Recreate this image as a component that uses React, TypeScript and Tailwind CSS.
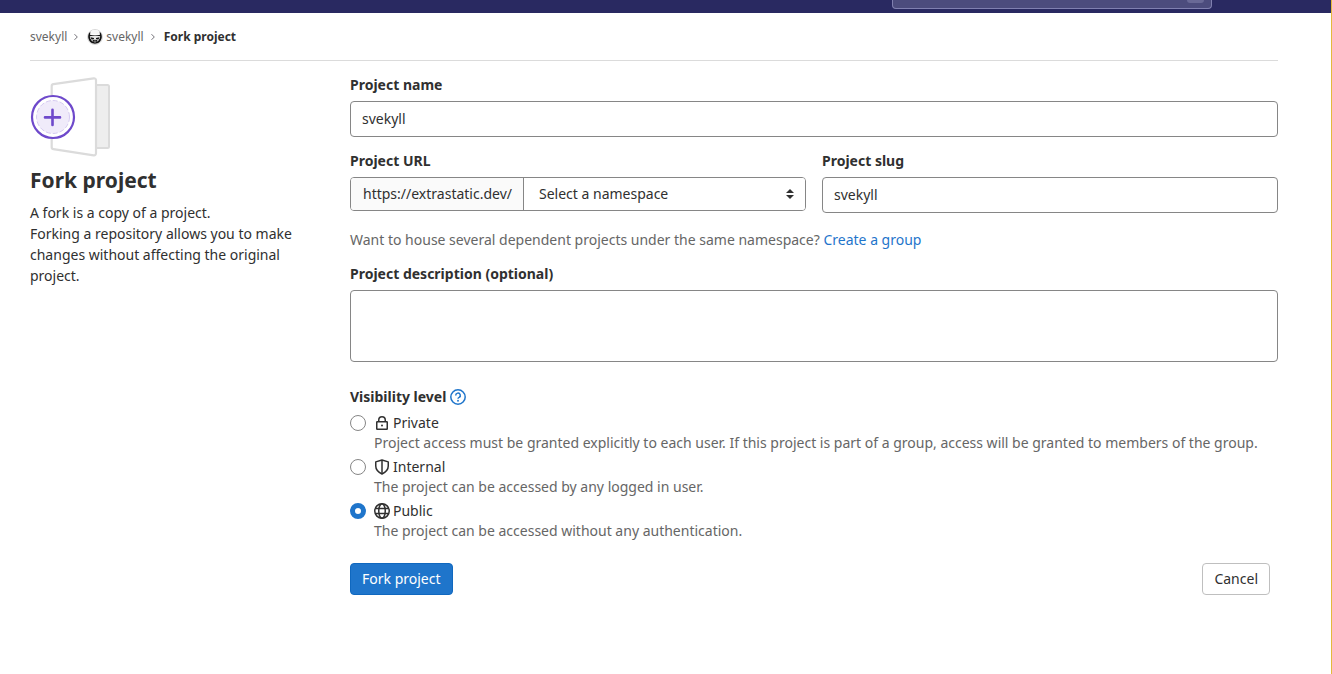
import { ReactNode } from 'react'

const INPUT = 'block w-full rounded border border-[#868686] bg-white px-[11px] text-sm text-[#303030] outline-none'
const LABEL = 'mb-[6px] block text-sm leading-5 font-bold'

const Chevron = () => (
  <svg className="mr-[2px] h-2 w-2 text-[#737278]" viewBox="0 0 8 8" fill="none" stroke="currentColor" strokeWidth="1">
    <path d="M2.5 1.2 5.3 4 2.5 6.8" />
  </svg>
)

const Avatar = () => (
  <svg className="h-4 w-4" viewBox="0 0 16 16">
    <circle cx="8" cy="8" r="7.5" fill="#fff" stroke="#d8d8d8" />
    <path d="M3.500 2.500C1.800 4 1 6 1.200 8.300 1.500 12 4.400 14.800 8 14.800s6.500-2.800 6.800-6.500c.2-2.300-.6-4.300-2.300-5.800l.3 3.500H3.200z" fill="#111" />
    <path d="M3.800 2.600C5 1.400 6.500 1 8 1s3 .4 4.200 1.600l.3 3c-3-.7-6-.7-9 0z" fill="#f6f6f6" />
    <path d="M2.800 7.300c3.400-1 7-1 10.400 0l-.5 2.300-1.500 2.400L8 13.500 4.800 12 3.300 9.600z" fill="#e8e8e8" />
    <path d="M3.600 8.300 7 9v1.300l-2.500.1zM12.400 8.300 9 9v1.300l2.500.1zM5.500 11.300 8 10.800l2.500.5-.7 1.500H6.200z" fill="#111" />
    <path d="M7 11.700h2v.6H7z" fill="#ddd" />
  </svg>
)

const ForkIllustration = () => (
  <svg className="block h-20 w-20" viewBox="0 0 80 80" fill="none">
    <path d="M66 8h11.500a1.500 1.500 0 0 1 1.500 1.500v60a1.500 1.500 0 0 1-1.500 1.500H66z" fill="#eee" stroke="#dbdbdb" strokeWidth="2" />
    <path
      d="M21.700 9.200a2 2 0 0 1 1.700-2L63.700 1.300A2 2 0 0 1 66 3.300v73a2 2 0 0 1-2.300 2l-40.300-6.200a2 2 0 0 1-1.700-2z"
      fill="#fff"
      stroke="#dbdbdb"
      strokeWidth="2.200"
    />
    <circle cx="23" cy="40" r="21" fill="#fff" stroke="#6e49cb" strokeWidth="2.200" />
    <circle cx="23" cy="40" r="16.500" fill="#f0ebfa" stroke="#cdbfee" strokeWidth=".8" strokeDasharray="5 2" />
    <path d="M22.500 32.700v15.300M15 40.400h15" stroke="#6e49cb" strokeWidth="2.600" strokeLinecap="round" />
  </svg>
)

const HelpIcon = () => (
  <svg className="h-4 w-4" viewBox="0 0 16 16" fill="none" stroke="currentColor" strokeWidth="1.500">
    <circle cx="8" cy="8" r="7.200" />
    <path d="M5.700 6.400a2.300 2.300 0 1 1 3.400 2C8.300 8.800 8 9 8 9.800" />
    <circle cx="8" cy="11.700" r=".95" fill="currentColor" stroke="none" />
  </svg>
)

const LockIcon = () => (
  <svg className="h-4 w-4" viewBox="0 0 16 16" fill="none" stroke="currentColor" strokeWidth="1.500">
    <rect x="2.750" y="6.750" width="10.500" height="7.500" rx=".5" />
    <path d="M4.750 6.500V5a3.250 3.250 0 0 1 6.500 0v1.500" />
    <circle cx="8" cy="10.500" r="1" fill="currentColor" stroke="none" />
  </svg>
)

const ShieldIcon = () => (
  <svg className="h-4 w-4" viewBox="0 0 16 16" fill="none" stroke="currentColor" strokeWidth="1.500">
    <path d="M8 1 1.750 2.900V7c0 3.800 2.500 6.200 6.250 8 3.750-1.800 6.250-4.200 6.250-8V2.900z" strokeLinejoin="round" />
    <path d="M8 1v14" />
  </svg>
)

const GlobeIcon = () => (
  <svg className="h-4 w-4" viewBox="0 0 16 16" fill="none" stroke="currentColor" strokeWidth="1.500">
    <circle cx="8" cy="8" r="7.250" />
    <ellipse cx="8" cy="8" rx="3.250" ry="7.250" />
    <path d="M1.500 5.500h13M1.500 10.500h13" />
  </svg>
)

type LevelProps = {
  id: string
  name: string
  help: string
  icon: ReactNode
  checked?: boolean
}

const Level = ({ id, name, help, icon, checked }: LevelProps) => (
  <div className="flex gap-2 text-sm leading-5">
    <input
      id={id}
      type="radio"
      name="visibility"
      defaultChecked={checked}
      aria-describedby={`${id}-help`}
      className="mt-[2px] h-4 w-4 shrink-0 appearance-none rounded-full border border-[#868686] bg-white checked:border-[5px] checked:border-[#1f75cb]"
    />
    <div>
      <label htmlFor={id} className="flex items-center gap-[3px]">
        {icon}
        {name}
      </label>
      <p id={`${id}-help`} className="text-[#666]">
        {help}
      </p>
    </div>
  </div>
)

export default function App() {
  return (
    <div className="flex min-h-screen flex-col border-r border-[#e3b93c] bg-white font-['Noto_Sans',sans-serif] text-sm text-[#303030]">
      <header className="flex h-[13px] items-start justify-end bg-[#292961] pr-[119px]">
        <div className="flex h-[9px] w-80 justify-end rounded-b border border-t-0 border-[#8080b0] bg-[#4c4c7d] pr-[7px]">
          <span className="h-[3px] w-[17px] rounded-b bg-[#696996]" />
        </div>
      </header>

      <div className="pr-[53px] pl-[30px]">
        <nav aria-label="Breadcrumb" className="flex h-12 items-center border-b border-[#dbdbdb] text-xs text-[#666]">
          <ol className="flex items-center gap-[5px]">
            <li>
              <a href="#owner">svekyll</a>
            </li>
            <Chevron />
            <li>
              <a href="#project" className="flex items-center gap-[3px]">
                <Avatar />
                svekyll
              </a>
            </li>
            <Chevron />
            <li>
              <a href="#fork" className="font-bold text-[#303030]">
                Fork project
              </a>
            </li>
          </ol>
        </nav>

        <main className="grid grid-cols-4 gap-8 pt-[14px]">
          <aside className="pt-[2px]">
            <ForkIllustration />
            <h1 className="mt-[9px] text-[21px] leading-7 font-bold">Fork project</h1>
            <p className="mt-2 leading-[21px]">
              A fork is a copy of a project.
              <br />
              Forking a repository allows you to make changes without affecting the original project.
            </p>
          </aside>

          <form className="col-span-3">
            <label htmlFor="name" className={LABEL}>
              Project name
            </label>
            <input id="name" defaultValue="svekyll" className={`${INPUT} h-9 pb-[2px]`} />

            <div className="mt-[14px] grid grid-cols-2 gap-4">
              <div>
                <label htmlFor="namespace" className={LABEL}>
                  Project URL
                </label>
                <div className="flex h-[34px] overflow-hidden rounded border border-[#868686]">
                  <span className="flex items-center border-r border-[#868686] bg-[#fafafa] pr-[11px] pl-3">https://extrastatic.dev/</span>
                  <div className="relative flex-1">
                    <select id="namespace" className="h-full w-full appearance-none bg-white pr-8 pl-[15px] text-sm outline-none">
                      <option>Select a namespace</option>
                    </select>
                    <svg className="pointer-events-none absolute top-[11px] right-[11px] h-[10px] w-2" viewBox="0 0 8 10" fill="#303030">
                      <path d="M4 0 8 4H0zM4 10 0 6h8z" />
                    </svg>
                  </div>
                </div>
              </div>
              <div>
                <label htmlFor="slug" className={LABEL}>
                  Project slug
                </label>
                <input id="slug" defaultValue="svekyll" className={`${INPUT} h-9 pb-[2px]`} />
              </div>
            </div>

            <p className="mt-[17px] leading-5 text-[#666]">
              Want to house several dependent projects under the same namespace?{' '}
              <a href="#new-group" className="text-[#1f75cb]">
                Create a group
              </a>
            </p>

            <div className="mt-[14px]">
              <label htmlFor="description" className={LABEL}>
                Project description (optional)
              </label>
              <textarea id="description" className={`${INPUT} h-[72px] resize-none py-2`} />
            </div>

            <fieldset className="mt-[25px]">
              <legend className="mb-[6px] flex items-center gap-1 leading-5 font-bold">
                Visibility level
                <a href="#visibility-help" aria-label="Visibility help" className="text-[#1f75cb]">
                  <HelpIcon />
                </a>
              </legend>
              <div className="flex flex-col gap-1">
                <Level
                  id="private"
                  name="Private"
                  icon={<LockIcon />}
                  help="Project access must be granted explicitly to each user. If this project is part of a group, access will be granted to members of the group."
                />
                <Level id="internal" name="Internal" icon={<ShieldIcon />} help="The project can be accessed by any logged in user." />
                <Level id="public" name="Public" icon={<GlobeIcon />} help="The project can be accessed without any authentication." checked />
              </div>
            </fieldset>

            <div className="mt-[22px] flex justify-between pr-2">
              <button type="submit" className="h-8 rounded border border-[#1068bf] bg-[#1f75cb] px-[11px] text-white">
                Fork project
              </button>
              <button type="button" className="h-8 rounded border border-[#bfbfbf] bg-white px-[11px]">
                Cancel
              </button>
            </div>
          </form>
        </main>
      </div>
    </div>
  )
}
